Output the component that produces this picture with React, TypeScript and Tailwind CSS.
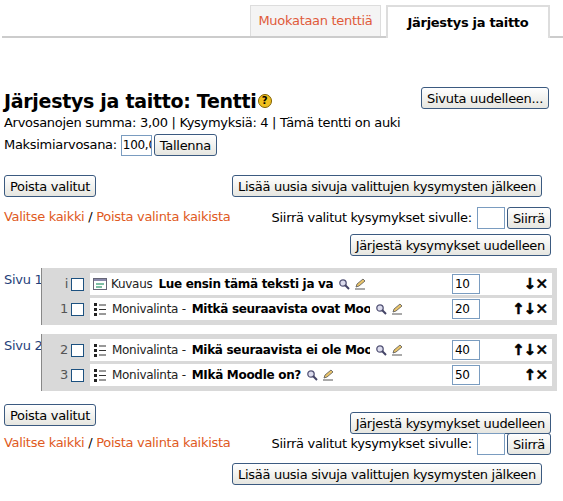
import React from "react";

const Btn = ({ children, className = "" }: { children: React.ReactNode; className?: string }) => (
  <button className={`h-[22px] px-[5px] border border-[#3b5a80] rounded-[3px] bg-gradient-to-b from-white to-[#e6e6e0] text-[13px] text-black leading-none whitespace-nowrap ${className}`}>{children}</button>
);

const Mag = () => (
  <svg width="12" height="12" viewBox="0 0 12 12" className="inline-block ml-[5px] shrink-0">
    <circle cx="5" cy="5" r="3.2" fill="#dde" stroke="#557" strokeWidth="1.3" />
    <path d="M7.3 7.3L11 11" stroke="#446" strokeWidth="2" />
  </svg>
);
const Edit = () => (
  <svg width="12" height="12" viewBox="0 0 12 12" className="inline-block ml-1 shrink-0">
    <path d="M1 11h10" stroke="#555" strokeWidth="1" />
    <path d="M2 9l1-3 6-5 2 2-6 5z" fill="#e9c46a" stroke="#555" strokeWidth="0.8" />
  </svg>
);
const ListIcon = () => (
  <svg width="14" height="13" viewBox="0 0 14 13" className="inline-block mr-[5px] shrink-0">
    <rect x="1" y="0" width="3" height="3" fill="#222" />
    <rect x="1" y="5" width="3" height="3" fill="#222" />
    <rect x="1" y="10" width="3" height="3" fill="#222" />
    <path d="M6 2h7M6 6.5h7M6 11h7" stroke="#333" strokeWidth="1" />
  </svg>
);
const DescIcon = () => (
  <svg width="14" height="12" viewBox="0 0 14 12" className="inline-block mr-1 shrink-0">
    <rect x="0.5" y="0.5" width="13" height="11" fill="#fff" stroke="#667" />
    <rect x="1" y="1" width="12" height="2" fill="#88a" />
    <path d="M3 6h8M3 9h6" stroke="#5a8" strokeWidth="1.5" />
  </svg>
);

type Row = { n: string; icon: "d" | "l"; type: string; name: string; grade: string; arrows: string };

const QRow = ({ r }: { r: Row }) => (
  <div className="flex items-center h-[22px]">
    <div className="w-[48px] flex items-center justify-end pr-[6px] text-[13px] text-[#555]">
      {r.n}
      <span className="ml-[3px] w-[13px] h-[13px] border border-[#1c5180] bg-white inline-block" />
    </div>
    <div className="flex-1 h-[22px] bg-white flex items-center pl-[3px] text-[12px] whitespace-nowrap overflow-hidden">
      <div className="w-[352px] flex items-center overflow-hidden">
        {r.icon === "d" ? <DescIcon /> : <ListIcon />}
        <span className="text-[#222] shrink-0">{r.type}</span>
        <span className="font-bold ml-[6px] max-w-[178px] overflow-hidden">{r.name}</span>
        <Mag />
        <Edit />
      </div>
      <span className="ml-[7px] w-[28px] h-[20px] border border-[#7a9cc0] text-[12px] flex items-end pl-[2px]">{r.grade}</span>
      <span className="flex-1 text-right pr-[5px] font-black text-[15px] tracking-[-1px]" style={{ WebkitTextStroke: "0.6px black" }}>{r.arrows}</span>
    </div>
  </div>
);

const Page = ({ label, rows }: { label: string; rows: Row[] }) => (
  <div className="flex">
    <div className="w-[41px] pl-[4px] pt-[2px] text-[13px] text-[#1f3f7a] whitespace-nowrap">{label}</div>
    <div className="w-[516px] bg-[#d9d9d9] border-l border-[#888] py-[5px] pr-[5px] flex flex-col gap-[3px]">
      {rows.map((r, i) => <QRow key={i} r={r} />)}
    </div>
  </div>
);

const Links = () => (
  <div className="text-[13px] text-[#e05a22]">Valitse kaikki <span className="text-black">/</span> Poista valinta kaikista</div>
);
const Move = () => (
  <div className="flex items-center text-[13px]">
    Siirrä valitut kysymykset sivulle:
    <span className="ml-[5px] w-[28px] h-[22px] border border-[#7a9cc0] bg-white" />
    <Btn className="ml-[2px]">Siirrä</Btn>
  </div>
);

export default function App() {
  const fam = { fontFamily: '"DejaVu Sans", Verdana, sans-serif' };
  return (
    <div className="w-[563px] h-[501px] bg-white text-black text-[13px] tracking-[-0.3px]" style={fam}>
      <div className="flex justify-end items-end h-[38px] border-b-2 border-[#ccc] ml-[2px] pr-[13px] gap-[5px]">
        <div className="w-[131px] h-[31px] bg-[#f4f4f4] border border-b-0 border-[#ddd] flex items-center justify-center text-[#e05a3a]">Muokataan tenttiä</div>
        <div className="w-[164px] bg-white border-2 border-b-0 border-[#ddd] flex items-center justify-center font-bold -mb-[2px] h-[33px]">Järjestys ja taitto</div>
      </div>
      <div className="px-[4px]">
        <div className="flex justify-between items-start mt-[49px]">
          <h1 className="text-[19px] font-bold leading-[24px] mt-[2px] flex items-center">
            Järjestys ja taitto: Tentti
            <span className="ml-[1px] w-[14px] h-[14px] rounded-full bg-[#f0c020] border border-[#806000] text-[10px] leading-[12px] text-center">?</span>
          </h1>
          <Btn className="mr-[10px]">Sivuta uudelleen...</Btn>
        </div>
        <div className="mt-[1px] leading-[18px]">Arvosanojen summa: 3,00 | Kysymyksiä: 4 | Tämä tentti on auki</div>
        <div className="flex items-center mt-[2px]">
          Maksimiarvosana:
          <span className="ml-[4px] w-[31px] h-[21px] border border-[#7a9cc0] flex items-center overflow-hidden pl-[1px] text-[12px] whitespace-nowrap">100,00</span>
          <Btn className="ml-[2px]">Tallenna</Btn>
        </div>
        <div className="flex justify-between mt-[19px] pr-[17px]">
          <Btn>Poista valitut</Btn>
          <Btn>Lisää uusia sivuja valittujen kysymysten jälkeen</Btn>
        </div>
        <div className="flex justify-between items-start mt-[10px] pr-[8px]">
          <Links />
          <Move />
        </div>
        <div className="flex justify-end mt-[5px] pr-[8px]"><Btn>Järjestä kysymykset uudelleen</Btn></div>
      </div>
      <div className="mt-[12px]">
        <Page label="Sivu 1" rows={[
          { n: "i", icon: "d", type: "Kuvaus", name: "Lue ensin tämä teksti ja va", grade: "10", arrows: "↓✕" },
          { n: "1", icon: "l", type: "Monivalinta -", name: "Mitkä seuraavista ovat Moodle", grade: "20", arrows: "↑↓✕" },
        ]} />
        <div className="h-[9px]" />
        <Page label="Sivu 2" rows={[
          { n: "2", icon: "l", type: "Monivalinta -", name: "Mikä seuraavista ei ole Moodle", grade: "40", arrows: "↑↓✕" },
          { n: "3", icon: "l", type: "Monivalinta -", name: "MIkä Moodle on?", grade: "50", arrows: "↑✕" },
        ]} />
      </div>
      <div className="px-[4px]">
        <div className="flex justify-between items-start mt-[13px] pr-[8px]">
          <Btn>Poista valitut</Btn>
          <Btn className="mt-[8px]">Järjestä kysymykset uudelleen</Btn>
        </div>
        <div className="flex justify-between items-start mt-[-1px] pr-[8px]">
          <Links />
          <Move />
        </div>
        <div className="flex justify-end mt-[8px] pr-[17px]">
          <Btn>Lisää uusia sivuja valittujen kysymysten jälkeen</Btn>
        </div>
      </div>
    </div>
  );
}
